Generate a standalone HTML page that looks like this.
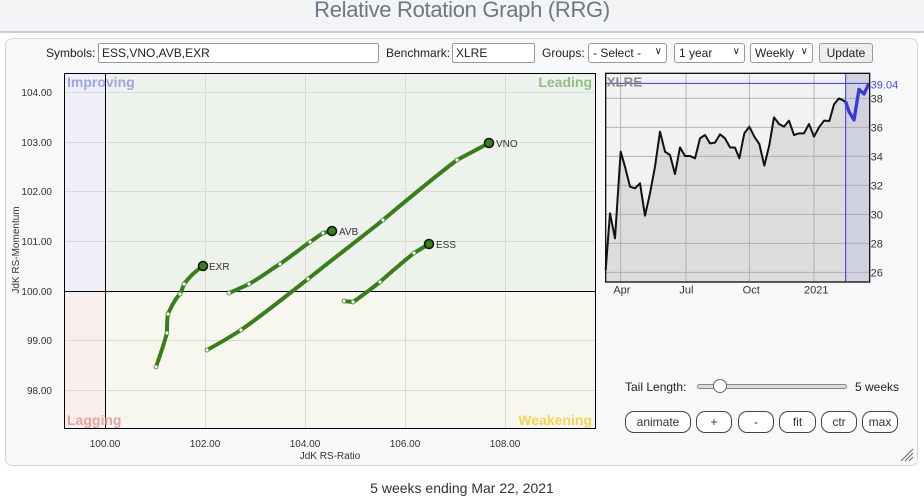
<!DOCTYPE html>
<html><head><meta charset="utf-8"><style>
*{box-sizing:border-box;margin:0;padding:0}
body{width:924px;height:499px;background:#fff;font-family:"Liberation Sans",sans-serif;position:relative;overflow:hidden;color:#222}
.top{position:absolute;left:0;top:0;width:924px;height:33px;background:#f3f4f6;border-bottom:2px solid #c9ced3}
.title{position:absolute;left:0;width:924px;top:-3px;text-align:center;font-size:22px;color:#6c7885;letter-spacing:-0.3px}
.panel{position:absolute;left:5px;top:38px;width:913px;height:428px;background:#f7f8fa;border:1px solid #d3d6da;border-radius:7px}
.lbl{position:absolute;font-size:12px;color:#222}
.inp{position:absolute;height:20px;border:1px solid #999;background:#fff;font-size:12px;padding:2px 3px;border-radius:2px}
.sel{position:absolute;height:20px;border:1px solid #999;background:#fff;font-size:12px;padding:2px 4px;border-radius:3px}
.btn{position:absolute;height:20px;border:1px solid #999;background:#eee;font-size:12px;text-align:center;line-height:18px;border-radius:3px}
.rb{position:absolute;top:411px;height:22px;border:1px solid #444;border-radius:9px;font-size:12px;text-align:center;line-height:20px;background:#fff;color:#333}
.foot{position:absolute;top:480px;left:0;width:924px;text-align:center;font-size:14px;color:#333}
</style></head><body>
<div class="top"><div class="title">Relative Rotation Graph (RRG)</div></div>
<div class="panel"></div>
<div class="lbl" style="left:46px;top:46px">Symbols:</div>
<div class="inp" style="left:98px;top:43px;width:281px">ESS,VNO,AVB,EXR</div>
<div class="lbl" style="left:386px;top:46px">Benchmark:</div>
<div class="inp" style="left:452px;top:43px;width:83px">XLRE</div>
<div class="lbl" style="left:542px;top:46px">Groups:</div>
<div class="sel" style="left:588px;top:43px;width:79px">- Select - <span style="float:right;font-size:10px">&#8744;</span></div>
<div class="sel" style="left:674px;top:43px;width:71px">1 year <span style="float:right;font-size:10px">&#8744;</span></div>
<div class="sel" style="left:750px;top:43px;width:63px">Weekly<span style="float:right;font-size:10px">&#8744;</span></div>
<div class="btn" style="left:819px;top:43px;width:54px">Update</div>

<svg style="position:absolute;left:0;top:0" width="924" height="499">
<rect x="65" y="73" width="40" height="218" fill="#eeeff8"/>
<rect x="105" y="73" width="490" height="218" fill="#eef2ed"/>
<rect x="65" y="291" width="40" height="137" fill="#f8eeee"/>
<rect x="105" y="291" width="490" height="137" fill="#f7f7ef"/>
<g stroke="#d9dcd6" stroke-width="1">
<line x1="205.5" y1="73" x2="205.5" y2="428"/><line x1="305.5" y1="73" x2="305.5" y2="428"/><line x1="405.5" y1="73" x2="405.5" y2="428"/><line x1="505.5" y1="73" x2="505.5" y2="428"/>
<line x1="65" y1="92.5" x2="595" y2="92.5"/><line x1="65" y1="142.5" x2="595" y2="142.5"/><line x1="65" y1="191.5" x2="595" y2="191.5"/><line x1="65" y1="241.5" x2="595" y2="241.5"/><line x1="65" y1="340.5" x2="595" y2="340.5"/><line x1="65" y1="390.5" x2="595" y2="390.5"/>
</g>
<line x1="105.5" y1="73" x2="105.5" y2="428" stroke="#000"/>
<line x1="65" y1="291.5" x2="595" y2="291.5" stroke="#000"/>
<rect x="64.5" y="73.5" width="531" height="355" fill="none" stroke="#000"/>
<g font-size="14" font-weight="bold" font-family="Liberation Sans">
<text x="67" y="87" fill="#a0a5dd">Improving</text>
<text x="592" y="87" fill="#8fbf85" text-anchor="end">Leading</text>
<text x="67" y="425" fill="#e5a3a3">Lagging</text>
<text x="592" y="425" fill="#f0d458" text-anchor="end">Weakening</text>
</g>
<g font-size="10" fill="#333" text-anchor="end">
<text x="52" y="96">104.00</text><text x="52" y="146">103.00</text><text x="52" y="195">102.00</text><text x="52" y="245">101.00</text><text x="52" y="295">100.00</text><text x="52" y="344">99.00</text><text x="52" y="394">98.00</text>
</g>
<g font-size="10" fill="#333" text-anchor="middle">
<text x="105" y="447">100.00</text><text x="205" y="447">102.00</text><text x="305" y="447">104.00</text><text x="405" y="447">106.00</text><text x="505" y="447">108.00</text>
<text x="330" y="459">JdK RS-Ratio</text>
</g>
<text transform="translate(19,250) rotate(-90)" font-size="10" fill="#333" text-anchor="middle">JdK RS-Momentum</text>
<g fill="none" stroke="#3a7d1c" stroke-width="4" stroke-linecap="round" stroke-linejoin="round">
<path d="M156,367 C162,350 165,340 167,333 C167,325 167,318 168,314 C172,305 176,298 180,294 C182,290 183,287 184,284 C190,276 197,270 203,266"/>
<path d="M229,293 C236,290 243,287 249,284 C260,278 270,270 280,264 C290,257 300,249 310,242 C316,238 320,235 323,233 L332,231"/>
<path d="M207,350 C220,343 230,337 241,330 C264,314 286,296 308,279 C333,259 358,240 383,220 C408,199 432,179 457,160 L489,143"/>
<path d="M344,301 L353,302 C362,296 371,289 380,282 C391,272 403,262 414,253 L429,244"/>
</g>
<g fill="#fff" stroke="#3a7d1c" stroke-width="0.8">
<circle cx="156" cy="367" r="2"/><circle cx="167" cy="333" r="2"/><circle cx="168" cy="314" r="2"/><circle cx="180" cy="294" r="2"/><circle cx="184" cy="284" r="2"/>
<circle cx="229" cy="293" r="2"/><circle cx="249" cy="284" r="2"/><circle cx="280" cy="264" r="2"/><circle cx="310" cy="242" r="2"/><circle cx="323" cy="233" r="2"/>
<circle cx="207" cy="350" r="2"/><circle cx="241" cy="330" r="2"/><circle cx="308" cy="279" r="2"/><circle cx="383" cy="220" r="2"/><circle cx="457" cy="160" r="2"/>
<circle cx="344" cy="301" r="2"/><circle cx="353" cy="302" r="2"/><circle cx="380" cy="282" r="2"/><circle cx="414" cy="253" r="2"/>
</g>
<g fill="#3a7d1c" stroke="#111" stroke-width="1.5">
<circle cx="203" cy="266" r="4.5"/><circle cx="332" cy="231" r="4.5"/><circle cx="489" cy="143" r="4.5"/><circle cx="429" cy="244" r="4.5"/>
</g>
<g font-size="10" fill="#333">
<text x="209" y="270">EXR</text><text x="339" y="235">AVB</text><text x="496" y="147">VNO</text><text x="436" y="248">ESS</text>
</g>
</svg>

<svg style="position:absolute;left:600px;top:70px" width="324" height="230" viewBox="0 0 972 690">
<rect x="17" y="10" width="792" height="626" fill="#f2f2f2"/>
<path d="M17,600 L30,430 L45,505 L62,245 L75,290 L90,350 L105,355 L120,340 L135,437 L150,370 L165,290 L180,185 L195,245 L210,255 L225,312 L240,232 L255,258 L270,258 L285,265 L300,205 L315,195 L330,220 L345,218 L360,193 L375,205 L390,232 L405,233 L418,265 L433,190 L448,170 L463,200 L478,222 L493,287 L508,225 L522,142 L537,162 L552,170 L567,152 L582,195 L597,190 L612,190 L627,162 L642,200 L657,172 L672,152 L688,153 L702,103 L717,85 L737,95 L737,636 L17,636 Z" fill="#dcdcdc"/>
<rect x="737" y="10" width="72" height="626" fill="#d0d2e2"/>
<g stroke="#aaa" stroke-width="2.5">
<line x1="62" y1="10" x2="62" y2="636"/><line x1="258" y1="10" x2="258" y2="636"/><line x1="448" y1="10" x2="448" y2="636"/><line x1="642" y1="10" x2="642" y2="636"/>
<line x1="17" y1="85" x2="809" y2="85"/><line x1="17" y1="172" x2="809" y2="172"/><line x1="17" y1="259" x2="809" y2="259"/><line x1="17" y1="346" x2="809" y2="346"/><line x1="17" y1="433" x2="809" y2="433"/><line x1="17" y1="520" x2="809" y2="520"/><line x1="17" y1="607" x2="809" y2="607"/>
</g>
<path d="M17,600 L30,430 L45,505 L62,245 L75,290 L90,350 L105,355 L120,340 L135,437 L150,370 L165,290 L180,185 L195,245 L210,255 L225,312 L240,232 L255,258 L270,258 L285,265 L300,205 L315,195 L330,220 L345,218 L360,193 L375,205 L390,232 L405,233 L418,265 L433,190 L448,170 L463,200 L478,222 L493,287 L508,225 L522,142 L537,162 L552,170 L567,152 L582,195 L597,190 L612,190 L627,162 L642,200 L657,172 L672,152 L688,153 L702,103 L717,85 L737,95" fill="none" stroke="#111" stroke-width="6" stroke-linejoin="round"/>
<path d="M737,95 L747,125 L762,150 L777,58 L792,72 L807,40" fill="none" stroke="#3a3ad0" stroke-width="10" stroke-linejoin="round"/>
<line x1="17" y1="40" x2="809" y2="40" stroke="#3a3ad0" stroke-width="3"/>
<line x1="737" y1="10" x2="737" y2="636" stroke="#3a3ad0" stroke-width="3"/>
<rect x="17" y="10" width="792" height="626" fill="none" stroke="#111" stroke-width="4"/>
<text x="20" y="50" font-size="40" font-weight="bold" fill="#888">XLRE</text>
<g font-size="33" fill="#333">
<text x="812" y="97">38</text><text x="812" y="184">36</text><text x="812" y="271">34</text><text x="812" y="358">32</text><text x="812" y="445">30</text><text x="812" y="532">28</text><text x="812" y="619">26</text>
<text x="812" y="55" fill="#4a4ad0">39.04</text>
<text x="40" y="670">Apr</text><text x="238" y="670">Jul</text><text x="428" y="670">Oct</text><text x="612" y="670">2021</text>
</g>
</svg>

<div class="lbl" style="left:625px;top:380px">Tail Length:</div>
<div style="position:absolute;left:697px;top:384px;width:150px;height:5px;border:1px solid #888;border-radius:3px;background:#ddd"></div>
<div style="position:absolute;left:713px;top:379px;width:14px;height:14px;border:1px solid #666;border-radius:50%;background:#fff"></div>
<div class="lbl" style="left:855px;top:380px">5 weeks</div>
<div class="rb" style="left:625px;width:66px">animate</div>
<div class="rb" style="left:696px;width:36px">+</div>
<div class="rb" style="left:738px;width:36px">-</div>
<div class="rb" style="left:779px;width:37px">fit</div>
<div class="rb" style="left:821px;width:36px">ctr</div>
<div class="rb" style="left:862px;width:36px">max</div>
<svg style="position:absolute;left:900px;top:448px" width="14" height="14"><g stroke="#666" stroke-width="1"><line x1="1" y1="13" x2="13" y2="1"/><line x1="5" y1="13" x2="13" y2="5"/><line x1="9" y1="13" x2="13" y2="9"/></g></svg>
<div class="foot">5 weeks ending Mar 22, 2021</div>
</body></html>
